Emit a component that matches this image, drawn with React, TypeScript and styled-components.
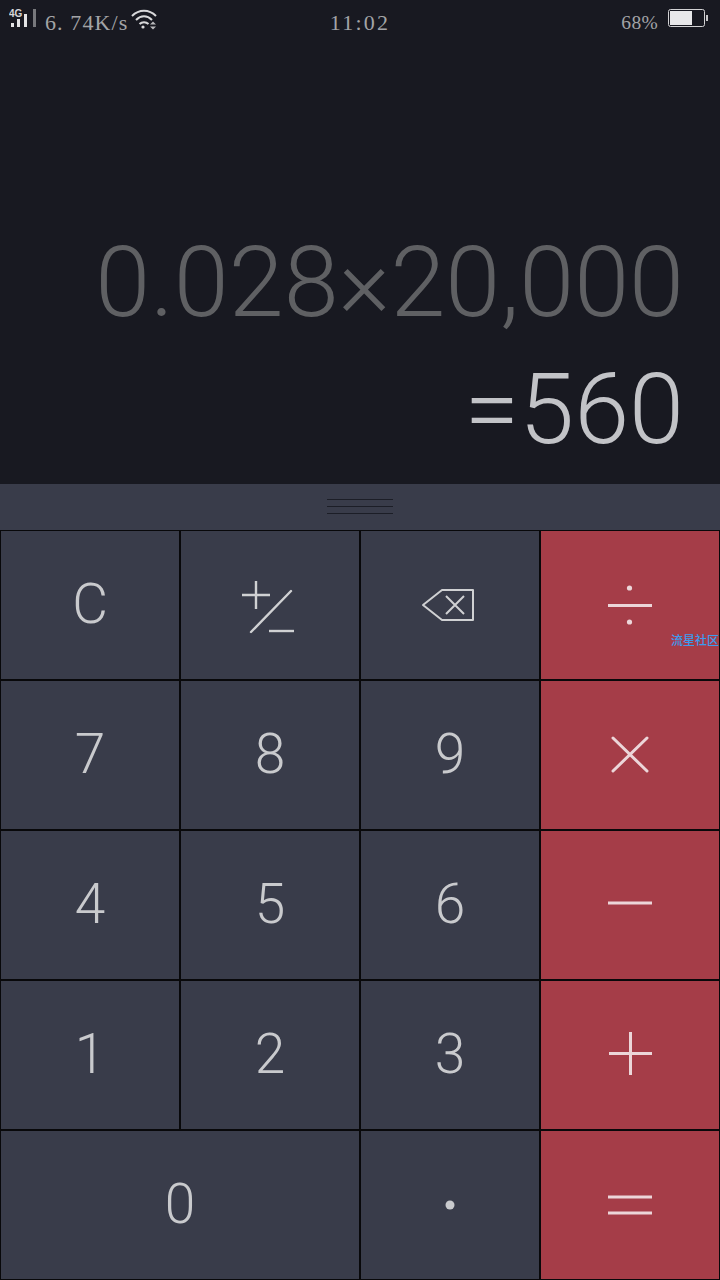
import React from 'react';
import styled, { createGlobalStyle } from 'styled-components';

const GlobalStyle = createGlobalStyle`
    html, body {
        margin: 0;
        padding: 0;
        background: #181921;
    }
    * {
        box-sizing: border-box;
    }
`;

const Screen = styled.div`
    display: flex;
    flex-direction: column;
    width: 720px;
    height: 1280px;
    overflow: hidden;
    background: #181921;
    font-family: Roboto, "Liberation Sans", sans-serif;
`;

const StatusBar = styled.div`
    display: grid;
    grid-template-columns: 1fr auto 1fr;
    align-items: flex-start;
    height: 40px;
    color: #a3a4a7;
    font-family: "Liberation Serif", serif;
    font-size: 22px;
    line-height: 26px;
`;

const StatusLeft = styled.div`
    display: flex;
    align-items: flex-start;
    padding: 9px 0 0 9px;
`;

const StatusRight = styled.div`
    display: flex;
    align-items: flex-start;
    justify-content: flex-end;
    padding: 9px 11px 0 0;
`;

const Speed = styled.span`
    margin: 1px 3px 0 8px;
    letter-spacing: 1.1px;
`;

const Clock = styled.span`
    margin-top: 10px;
    letter-spacing: 2.2px;
`;

const Percent = styled.span`
    margin: 1px 10px 0 0;
    font-size: 19.5px;
    letter-spacing: 0.3px;
`;

const Display = styled.div`
    flex: 1;
    display: flex;
    flex-direction: column;
    align-items: flex-end;
    padding: 0 36px 11px 0;
    justify-content: flex-end;
    font-weight: 300;
    font-size: 99px;
    line-height: 127px;
`;

const Expression = styled.div`
    color: #5f6063;
`;

const Result = styled.div`
    color: #c2c3c7;
`;

const Handle = styled.div`
    display: flex;
    flex-direction: column;
    align-items: center;
    justify-content: center;
    gap: 6px;
    height: 46px;
    padding-bottom: 1px;
    background: #393c4a;
`;

const HandleLine = styled.div`
    width: 66px;
    height: 1px;
    background: #1c1e27;
`;

const Keypad = styled.div`
    position: relative;
    display: grid;
    grid-template-columns: repeat(4, 180px);
    grid-auto-rows: 150px;
`;

const Key = styled.div<{ $accent?: boolean; $wide?: boolean }>`
    display: flex;
    align-items: center;
    justify-content: center;
    grid-column: ${({ $wide }) => ($wide ? 'span 2' : 'span 1')};
    border: 1px solid #08080a;
    background: ${({ $accent }) => ($accent ? '#a53d48' : '#393c4a')};
    color: #c9cacd;
    font-size: 55px;
    font-weight: 300;
`;

const Digit = styled.span`
    margin-bottom: 3px;
`;

const Watermark = styled.span`
    position: absolute;
    top: 102px;
    left: 671px;
    white-space: nowrap;
    color: #3a9cf0;
    font-family: "Noto Sans CJK SC", sans-serif;
    font-size: 12px;
    font-weight: 500;
    line-height: 16px;
`;

const SignalIcon = () => (
    <svg width="28" height="20" viewBox="0 0 28 20">
        <text x="0" y="7.5" fontFamily="Liberation Sans, sans-serif" fontSize="10" fontWeight="700" fill="#d6d6d8">
            4G
        </text>
        <rect x="2" y="14" width="3" height="4" fill="#e4e4e6" />
        <rect x="8" y="10" width="3" height="8" fill="#e4e4e6" />
        <rect x="15" y="5" width="3" height="13" fill="#e4e4e6" />
        <rect x="24" y="0" width="3" height="18" fill="#77787c" />
    </svg>
);

const WifiIcon = () => (
    <svg width="26" height="22" viewBox="0 0 26 22" fill="none" stroke="#d8d8da" strokeWidth="2">
        <path d="M1 7 C8 0 18 0 25 7" />
        <path d="M5 11 C10 6 16 6 21 11" />
        <path d="M8.5 15 C11 12.5 15 12.5 17.5 15" />
        <circle cx="12" cy="18" r="1.6" fill="#d8d8da" stroke="none" />
        <path d="M19 15.5 L25 15.5 L22 12.5 Z M19 17.5 L25 17.5 L22 20.5 Z" fill="#b9b9bc" stroke="none" />
    </svg>
);

const BatteryIcon = () => (
    <svg width="41" height="18" viewBox="0 0 41 18" fill="none">
        <rect x="0.5" y="0.5" width="36" height="17" rx="2" stroke="#d2d2d4" />
        <rect x="2" y="2" width="22" height="14" fill="#e8e8ea" />
        <rect x="38" y="6" width="2" height="6" fill="#c6c6c8" />
    </svg>
);

const PlusMinusIcon = () => (
    <svg width="60" height="60" viewBox="0 0 60 60" fill="none" stroke="#d0d1d3" strokeWidth="2.4">
        <path d="M2 20 H30 M16 6 V34" />
        <path d="M11 57 L51 16" strokeLinecap="round" />
        <path d="M29 56 H54" />
    </svg>
);

const BackspaceIcon = () => (
    <svg width="60" height="40" viewBox="0 0 60 40" fill="none" stroke="#d0d1d3" strokeWidth="2">
        <path d="M3 20 L22 5 H53 V35 H22 Z" strokeLinejoin="round" />
        <path d="M26 11 L44 29 M44 11 L26 29" />
    </svg>
);

const DivideIcon = () => (
    <svg width="60" height="60" viewBox="0 0 60 60" fill="#ecd6d9">
        <rect x="8" y="29" width="44" height="3" />
        <circle cx="29.5" cy="13" r="2.6" />
        <circle cx="29.5" cy="47" r="2.6" />
    </svg>
);

const TimesIcon = () => (
    <svg width="60" height="60" viewBox="0 0 60 60" stroke="#ecd6d9" strokeWidth="3" strokeLinecap="round">
        <path d="M13 13 L47 46 M47 13 L13 46" />
    </svg>
);

const MinusIcon = () => (
    <svg width="60" height="60" viewBox="0 0 60 60" fill="#ecd6d9">
        <rect x="8" y="26.5" width="44" height="3" />
    </svg>
);

const PlusIcon = () => (
    <svg width="60" height="60" viewBox="0 0 60 60" fill="#ecd6d9">
        <rect x="9" y="27" width="43" height="3" />
        <rect x="29" y="7" width="3" height="43" />
    </svg>
);

const EqualsIcon = () => (
    <svg width="60" height="60" viewBox="0 0 60 60" fill="#ecd6d9">
        <rect x="8" y="20.5" width="44" height="3" />
        <rect x="8" y="36.5" width="44" height="3" />
    </svg>
);

const DotIcon = () => (
    <svg width="12" height="12" viewBox="0 0 12 12">
        <circle cx="6" cy="6" r="4.5" fill="#c9cacd" />
    </svg>
);

const App: React.FC = () => {
    return (
        <Screen>
            <GlobalStyle />
            <StatusBar>
                <StatusLeft>
                    <SignalIcon />
                    <Speed>6. 74K/s</Speed>
                    <WifiIcon />
                </StatusLeft>
                <Clock>11:02</Clock>
                <StatusRight>
                    <Percent>68%</Percent>
                    <BatteryIcon />
                </StatusRight>
            </StatusBar>
            <Display>
                <Expression>0.028×20,000</Expression>
                <Result>=560</Result>
            </Display>
            <Handle>
                <HandleLine />
                <HandleLine />
                <HandleLine />
            </Handle>
            <Keypad>
                <Key><Digit>C</Digit></Key>
                <Key><PlusMinusIcon /></Key>
                <Key><BackspaceIcon /></Key>
                <Key $accent><DivideIcon /></Key>
                <Key><Digit>7</Digit></Key>
                <Key><Digit>8</Digit></Key>
                <Key><Digit>9</Digit></Key>
                <Key $accent><TimesIcon /></Key>
                <Key><Digit>4</Digit></Key>
                <Key><Digit>5</Digit></Key>
                <Key><Digit>6</Digit></Key>
                <Key $accent><MinusIcon /></Key>
                <Key><Digit>1</Digit></Key>
                <Key><Digit>2</Digit></Key>
                <Key><Digit>3</Digit></Key>
                <Key $accent><PlusIcon /></Key>
                <Key $wide><Digit>0</Digit></Key>
                <Key><DotIcon /></Key>
                <Key $accent><EqualsIcon /></Key>
                <Watermark>流星社区</Watermark>
            </Keypad>
        </Screen>
    );
};

export default App;
